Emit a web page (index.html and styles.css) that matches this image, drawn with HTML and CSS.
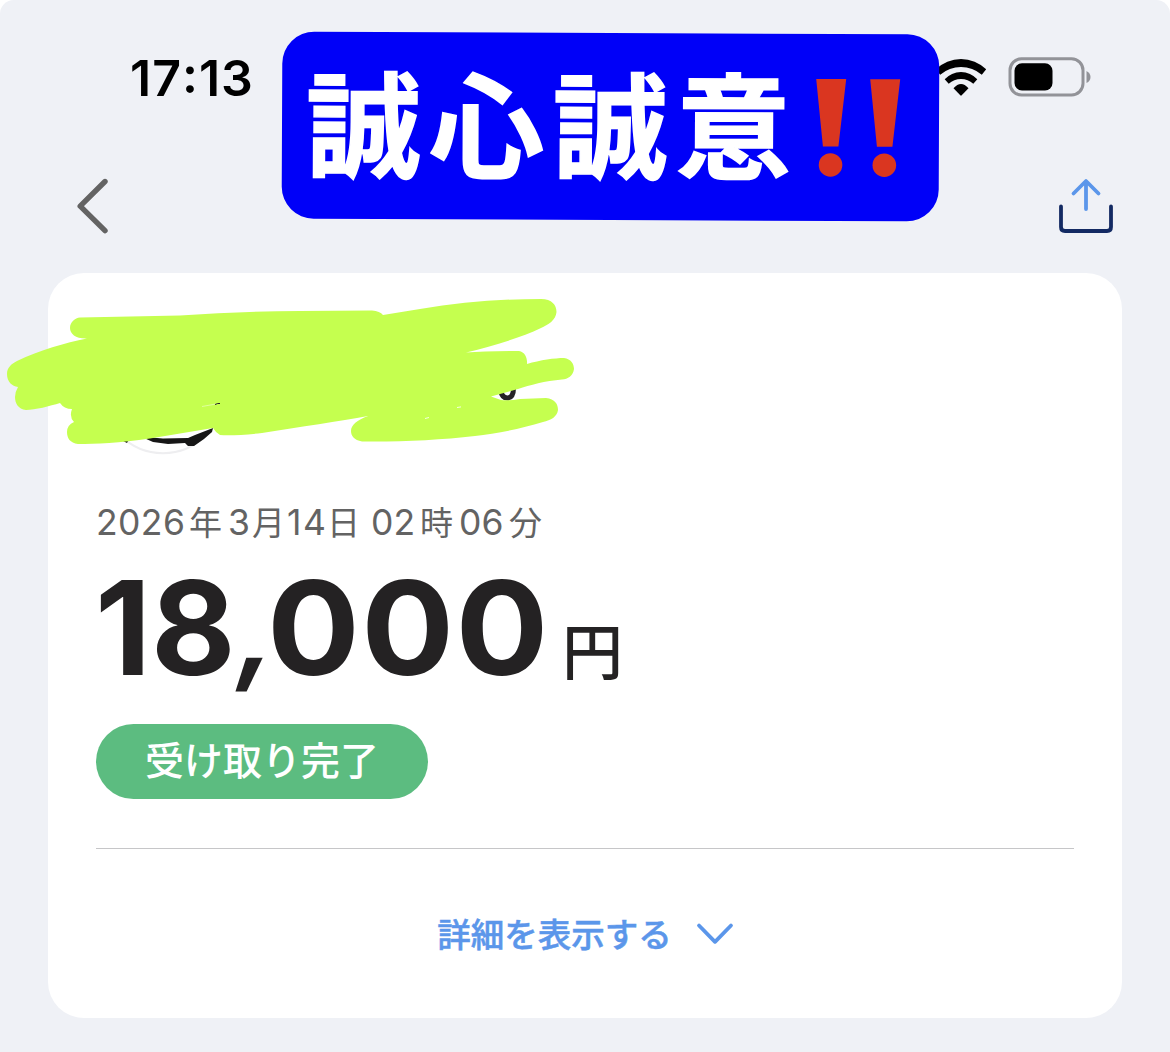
FILE: index.html
```html
<!DOCTYPE html>
<html lang="ja">
<head>
<meta charset="utf-8">
<title>受け取り完了</title>
<link rel="stylesheet" href="styles.css">
</head>
<body>
<main class="screen">
  <header class="status-bar">
    <time class="clock">17<span class="colon">:</span>13</time>
    <div class="status-icons">
      <svg class="wifi" width="54" height="40" viewBox="0 0 54 40" aria-label="Wi-Fi">
        <path d="M1.800 12.300a36 36 0 0 1 50.400 0l-4.400 5.400a32 32 0 0 0-41.600 0z"/>
        <path d="M10.700 22.300a22 22 0 0 1 32.600 0l-4 4.500a18.500 18.500 0 0 0-24.600 0z"/>
        <path d="M19.500 31.300q7.500-8.600 15 0l-6.800 7q-.7.7-1.400 0z"/>
      </svg>
      <svg class="battery" width="84" height="40" viewBox="0 0 84 40" aria-label="バッテリー">
        <rect x="2" y="1.8" width="73" height="36.2" rx="11.5" fill="none" stroke="#929398" stroke-width="3"/>
        <rect x="6.5" y="6.3" width="38" height="27.2" rx="7.5"/>
        <path d="M78.5 14q4 2 4 6t-4 6z" fill="#929398"/>
      </svg>
    </div>
  </header>

  <nav class="nav-bar">
    <svg width="32" height="56" viewBox="0 0 32 56" aria-label="戻る">
      <path d="M29 3.5 4.2 28.2 29 52.7" fill="none" stroke="#636363" stroke-width="5.4" stroke-linecap="round" stroke-linejoin="round"/>
    </svg>
    <svg width="56" height="56" viewBox="0 0 56 56" aria-label="共有" fill="none" stroke-width="3.8" stroke-linecap="round" stroke-linejoin="round">
      <path d="M28 31V3.5M15.5 15.5 28 3l12.500 12.500" stroke="#5b96ea"/>
      <path d="M3 28.500V49q0 4 4 4h42q4 0 4-4V28.500" stroke="#132a63"/>
    </svg>
  </nav>

  <section class="card">
    <div class="sender"></div>
    <p class="date"><span class="y">2026</span><span class="kanji ky">年</span><span class="m">3</span><span class="kanji km">月</span><span class="d">14</span><span class="kanji kd">日</span><span class="h">02</span><span class="kanji kh">時</span><span class="n">06</span><span class="kanji">分</span></p>
    <p class="amount"><span class="thousands">18</span><span class="comma">,</span><span class="units">000</span><span class="yen">円</span></p>
    <p class="badge">受け取り完了</p>
    <div class="details">
      <span>詳細を表示する</span>
      <svg width="38" height="24" viewBox="0 0 38 24" aria-hidden="true">
        <path d="M3 3.500 19 19.800 35 3.500" fill="none" stroke="#5b96ea" stroke-width="3.800" stroke-linecap="round" stroke-linejoin="round"/>
      </svg>
    </div>
  </section>

  <svg class="scribble" width="580" height="170" viewBox="0 290 580 170" aria-hidden="true">
    <path d="M120 435A60 60 0 0 0 206 435" fill="none" stroke="#eeeef0" stroke-width="2"/>
    <path d="M121 437l8 2-2 4-4-2zM145 437l18 1.500 25-.5 7-3 18-7-1 4-8 7-10 7-6 0-3-3-17 1-15-2-9-4z" fill="#161616"/>
    <path d="M500.500 390Q502 398.500 508 398Q514 397 513.500 386" fill="none" stroke="#252325" stroke-width="5"/>
    <path fill="#c5ff4f" d="M80 317.500 180 315.500C220 313 260 311 300 311L372 310.500Q380 311 383 315L420 309C460 302 500 299 541 299C552 299 556.500 305 556.500 312C556 320 548 325 541 328C520 338 490 347 466 352.500Q485 351 519 351C525 352 527.500 358 527 364C540 360 555 358 564 358C571 359 574 364 574 369C573 376 568 379 562 379.500C545 381 530 385 518 389L491 396.500 501 400Q508 401 520 399L546 398C555 399 558 404 558 410C557 417 551 420 543 422C520 429 495 434 475 436C440 440 400 442 362 441.500C354 440 351 436 351 431C351 425 357 420 368 416C340 421 300 427 262 433C245 435 230 435.500 220 435Q216 433 213 428L150 438.500C120 443 95 444 78 444C70 443 67 438 67 432Q67 425 74 422Q69 417 72 409Q64 409 60 403C50 406 35 410 26 410C18 409 15 403 15 397Q15 392 18 387C12 386 7 382 7 374C7 368 11 364 17 361C40 350 65 343 87 338.500C76 339 70 334 70 328C70 322 75 318 80 317.500Z"/>
    <path d="M202 406.500 217 403.800" stroke="#e5ffae" stroke-width=".8"/>
    <path d="M215 404.500q3-1.500 5-1" fill="none" stroke="#252325"/>
    <path d="M425 418.500l4-1M457 407.500l4-.6" stroke="#f4ffe0" stroke-width="1"/>
  </svg>

  <div class="banner">
    <span>誠心誠意</span>
    <svg width="88" height="102" viewBox="0 0 88 102" aria-label="‼️" fill="#da3620">
      <path d="M1 2H31L23.500 69.500H8zM55 2H85L77.500 69.500H62z"/>
      <circle cx="15.700" cy="88" r="11.800"/><circle cx="69.500" cy="88" r="11.800"/>
    </svg>
  </div>
</main>
</body>
</html>
```
FILE: styles.css
```css
* { box-sizing: border-box; }
body {
  margin: 0;
  background: #fff;
  font-family: Inter, "Noto Sans CJK JP", sans-serif;
  color: #242223;
}
p { margin: 0; }
svg { display: block; flex: none; }

.screen {
  position: relative;
  width: 1170px;
  height: 1052px;
  padding: 0 48px;
  background: #eff1f6;
  border-radius: 14px 14px 0 0;
  overflow: hidden;
}

.status-bar {
  display: flex;
  justify-content: space-between;
  align-items: center;
  height: 154px;
  padding: 0 30px 0 82px;
}
.clock {
  margin-top: 2px;
  font-size: 50px;
  font-weight: 600;
  line-height: 60px;
  color: #000;
  letter-spacing: 1px;
}
.colon {
  display: inline-block;
  transform: translateY(-3px);
}
.status-icons { display: flex; gap: 20px; }

.nav-bar {
  display: flex;
  justify-content: space-between;
  align-items: center;
  height: 104px;
  padding: 0 8px 0 28px;
}

.card {
  height: 745px;
  margin-top: 15px;
  padding: 0 48px;
  background: #fff;
  border-radius: 36px;
}
.sender { height: 224px; }

.date {
  display: flex;
  align-items: baseline;
  height: 52px;
  font-size: 35.5px;
  line-height: 52px;
  color: #636363;
  white-space: nowrap;
}
.date span { flex: none; }
.kanji { font-size: 33px; }
.y { width: 93px; letter-spacing: 0.4px; }
.ky { width: 39px; }
.m { width: 24px; }
.km { width: 35px; }
.d { width: 40px; letter-spacing: 1.5px; }
.kd { width: 44px; }
.h { width: 49px; }
.kh { width: 39px; }
.n { width: 50px; }

.amount {
  display: flex;
  align-items: baseline;
  height: 158px;
  font-size: 130px;
  font-weight: 700;
  line-height: 158px;
}
.thousands { width: 139px; margin-left: -1px; }
.comma {
  width: 33px;
  font-size: 112px;
  transform: translate(6px, -5px) skewX(-10deg);
}
.units {
  width: 283px;
  letter-spacing: 1.3px;
  transform: scaleX(1.06);
  transform-origin: 0 50%;
}
.yen {
  margin-left: 12px;
  font-size: 61px;
  font-weight: 500;
}

.badge {
  width: 332px;
  height: 75px;
  margin-top: 17px;
  border-radius: 38px;
  background: #5cbc80;
  color: #fff;
  font-size: 39px;
  font-weight: 500;
  line-height: 74px;
  text-align: center;
}

.details {
  display: flex;
  justify-content: center;
  align-items: center;
  gap: 25px;
  height: 170px;
  margin-top: 49px;
  border-top: 1px solid #c6c6c8;
  color: #5b96ea;
  font-size: 33.5px;
  font-weight: 500;
}
.details span {
  margin: -3px -1px 0 1px;
  -webkit-text-stroke: 0.5px #5b96ea;
}

.scribble {
  position: absolute;
  left: 0;
  top: 290px;
}

.banner {
  position: absolute;
  left: 282px;
  top: 33px;
  width: 657px;
  height: 187px;
  display: flex;
  align-items: center;
  padding-left: 24px;
  border-radius: 32px;
  background: #0000f8;
  color: #fff;
  font-size: 115px;
  font-weight: 700;
  letter-spacing: 8.3px;
  line-height: 186px;
  white-space: nowrap;
  transform: rotate(0.25deg);
}
.banner span {
  margin-top: 4px;
  -webkit-text-stroke: 1.5px #fff;
}
.banner svg { margin: 1px 0 0 16px; }
```
